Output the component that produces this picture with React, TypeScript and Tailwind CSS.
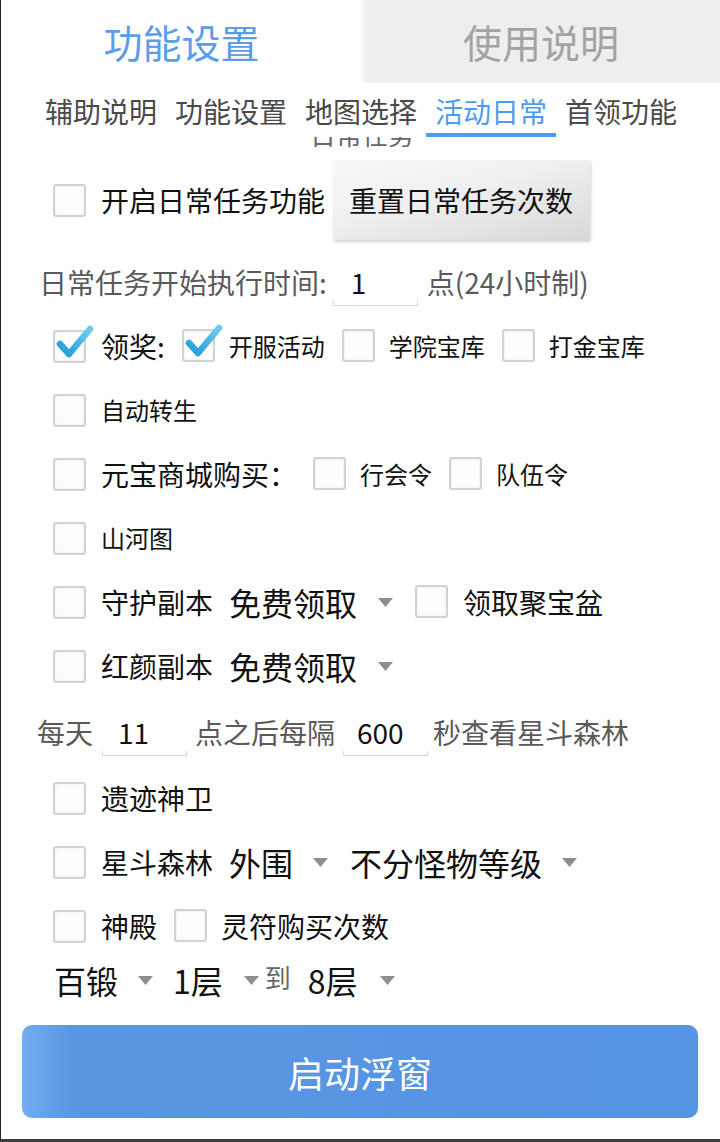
import React from "react"

const font = "font-['Noto_Sans_CJK_SC','Noto_Sans',sans-serif]"

function Box({ checked = false }: { checked?: boolean }) {
  return (
    <span className="relative inline-block w-[33px] h-[33px] shrink-0 rounded-[3px] border-2 border-[#d2d2d2] bg-[#fdfdfd] shadow-[inset_0_0_3px_rgba(0,0,0,0.08)]">
      {checked && (
        <svg className="absolute left-[-2px] top-[-10px] w-[44px] h-[44px]" viewBox="0 0 44 44">
          <defs>
            <linearGradient id="chk" x1="0" y1="1" x2="1" y2="0">
              <stop offset="0" stopColor="#1f9bd8" />
              <stop offset="1" stopColor="#6fcbf0" />
            </linearGradient>
          </defs>
          <path d="M7 22 L16 32 L37 7" fill="none" stroke="url(#chk)" strokeWidth="6.5" strokeLinecap="round" strokeLinejoin="round" />
        </svg>
      )}
    </span>
  )
}

function Arrow() {
  return (
    <svg className="w-[15px] h-[9px] shrink-0" viewBox="0 0 15 9">
      <path d="M0 0 L15 0 L7.5 9 Z" fill="#8e8e8e" />
    </svg>
  )
}

function Field({ value, w, pl }: { value: string; w: string; pl: string }) {
  return (
    <div className={`flex flex-col h-[48px] pt-[4px] ${w}`}>
      <div className={`flex-1 flex items-center text-[28px] leading-none text-[#111] ${pl}`}>{value}</div>
      <div className="h-[5px] border-x border-b border-[#d9d9d9]" />
    </div>
  )
}

const tabs = ["辅助说明", "功能设置", "地图选择", "活动日常", "首领功能"]

export default function App() {
  return (
    <div className={`${font} w-[720px] h-[1142px] bg-white border-l border-[#1c2230] border-b-[3px] border-b-[#3d3d3d] overflow-hidden flex flex-col`}>
      {/* top tabs */}
      <div className="flex h-[83px] shrink-0">
        <div className="w-[361px] flex items-center justify-center text-[39px] text-[#5b9de8] leading-none">功能设置</div>
        <div className="flex-1 flex items-center justify-center text-[39px] text-[#a3a3a3] leading-none bg-[linear-gradient(90deg,#f6f6f6_0%,#eeeeee_2%,#eeeeee_100%)]">
          使用说明
        </div>
      </div>

      {/* sub tabs */}
      <div className="flex h-[54px] shrink-0 pl-[35px]">
        {tabs.map((t) => (
          <div key={t} className="w-[130px] flex flex-col">
            <div className={`h-[50px] pt-[6px] flex items-center justify-center text-[28px] leading-none ${t === "活动日常" ? "text-[#4c9cf2]" : "text-[#4a4a4a]"}`}>
              {t}
            </div>
            <div className={`h-[4px] ${t === "活动日常" ? "bg-[#4c9cf2]" : ""}`} />
          </div>
        ))}
      </div>

      {/* scrolled-off section title */}
      <div className="h-[11px] overflow-hidden shrink-0">
        <div className="ml-[309px] -mt-[16px] text-[26px] leading-[26px] text-[#666]">日常任务</div>
      </div>

      {/* row 1 */}
      <div className="flex items-center h-[80px] mt-[12px] pl-[52px] shrink-0">
        <Box />
        <span className="ml-[15px] text-[28px] leading-none text-[#111]">开启日常任务功能</span>
        <div className="ml-[8px] w-[257px] h-[80px] flex items-center pl-[16px] rounded-[2px] text-[28px] leading-none text-[#111] bg-[linear-gradient(165deg,#f8f8f8_0%,#efefef_45%,#d8d8d8_100%)] shadow-[1px_2px_3px_rgba(0,0,0,0.18)]">
          重置日常任务次数
        </div>
      </div>

      {/* row 2 */}
      <div className="flex items-center h-[64px] mt-[10px] pl-[38px] shrink-0 text-[28px] leading-none text-[#5a5a5a]">
        <span>日常任务开始执行时间:</span>
        <div className="ml-[6px]">
          <Field value="1" w="w-[85px]" pl="pl-[18px]" />
        </div>
        <span className="ml-[9px]">点(24小时制)</span>
      </div>

      {/* row 3 */}
      <div className="flex items-center h-[64px] pl-[52px] shrink-0 leading-none text-[#111]">
        <Box checked />
        <span className="ml-[15px] text-[28px]">领奖:</span>
        <span className="ml-[17px]"><Box checked /></span>
        <span className="ml-[14px] text-[24px]">开服活动</span>
        <span className="ml-[17px]"><Box /></span>
        <span className="ml-[14px] text-[24px]">学院宝库</span>
        <span className="ml-[17px]"><Box /></span>
        <span className="ml-[14px] text-[24px]">打金宝库</span>
      </div>

      {/* row 4 */}
      <div className="flex items-center h-[64px] pl-[52px] shrink-0 leading-none text-[#111]">
        <Box />
        <span className="ml-[15px] text-[24px]">自动转生</span>
      </div>

      {/* row 5 */}
      <div className="flex items-center h-[64px] pl-[52px] shrink-0 leading-none text-[#111]">
        <Box />
        <span className="ml-[15px] text-[28px]">元宝商城购买：</span>
        <span className="ml-[16px]"><Box /></span>
        <span className="ml-[14px] text-[24px]">行会令</span>
        <span className="ml-[17px]"><Box /></span>
        <span className="ml-[14px] text-[24px]">队伍令</span>
      </div>

      {/* row 6 */}
      <div className="flex items-center h-[64px] pl-[52px] shrink-0 leading-none text-[#111]">
        <Box />
        <span className="ml-[15px] text-[24px]">山河图</span>
      </div>

      {/* row 7 */}
      <div className="flex items-center h-[64px] pl-[52px] shrink-0 leading-none text-[#111]">
        <Box />
        <span className="ml-[15px] text-[28px]">守护副本</span>
        <span className="ml-[16px] text-[32px]">免费领取</span>
        <span className="ml-[21px]"><Arrow /></span>
        <span className="ml-[22px]"><Box /></span>
        <span className="ml-[15px] text-[28px]">领取聚宝盆</span>
      </div>

      {/* row 8 */}
      <div className="flex items-center h-[64px] pl-[52px] shrink-0 leading-none text-[#111]">
        <Box />
        <span className="ml-[15px] text-[28px]">红颜副本</span>
        <span className="ml-[16px] text-[32px]">免费领取</span>
        <span className="ml-[21px]"><Arrow /></span>
      </div>

      {/* row 9 */}
      <div className="flex items-center h-[68px] pl-[36px] shrink-0 text-[28px] leading-none text-[#5a5a5a]">
        <span>每天</span>
        <div className="ml-[9px]">
          <Field value="11" w="w-[85px]" pl="pl-[16px]" />
        </div>
        <span className="ml-[8px]">点之后每隔</span>
        <div className="ml-[8px]">
          <Field value="600" w="w-[85px]" pl="pl-[14px]" />
        </div>
        <span className="ml-[5px]">秒查看星斗森林</span>
      </div>

      {/* row 10 */}
      <div className="flex items-center h-[64px] pl-[52px] shrink-0 leading-none text-[#111]">
        <Box />
        <span className="ml-[15px] text-[28px]">遗迹神卫</span>
      </div>

      {/* row 11 */}
      <div className="flex items-center h-[64px] pl-[52px] shrink-0 leading-none text-[#111]">
        <Box />
        <span className="ml-[15px] text-[28px]">星斗森林</span>
        <span className="ml-[16px] text-[32px]">外围</span>
        <span className="ml-[20px]"><Arrow /></span>
        <span className="ml-[22px] text-[32px]">不分怪物等级</span>
        <span className="ml-[20px]"><Arrow /></span>
      </div>

      {/* row 12 */}
      <div className="flex items-center h-[64px] pl-[52px] shrink-0 leading-none text-[#111]">
        <Box />
        <span className="ml-[15px] text-[28px]">神殿</span>
        <span className="ml-[17px]"><Box /></span>
        <span className="ml-[14px] text-[28px]">灵符购买次数</span>
      </div>

      {/* row 13 */}
      <div className="flex items-center h-[44px] pl-[53px] shrink-0 leading-none text-[#111]">
        <span className="text-[32px]">百锻</span>
        <span className="ml-[20px]"><Arrow /></span>
        <span className="ml-[20px] text-[32px]">1层</span>
        <span className="ml-[21px]"><Arrow /></span>
        <span className="ml-[6px] text-[26px] text-[#666] -mt-[6px]">到</span>
        <span className="ml-[17px] text-[32px]">8层</span>
        <span className="ml-[22px]"><Arrow /></span>
      </div>

      {/* start button */}
      <div className="mt-[23px] ml-[21px] w-[676px] h-[93px] shrink-0 rounded-[10px] flex items-center justify-center text-[36px] leading-none text-white bg-[linear-gradient(90deg,#72adef_0%,#5a97e3_7%,#5594e2_100%)]">
        启动浮窗
      </div>
    </div>
  )
}
